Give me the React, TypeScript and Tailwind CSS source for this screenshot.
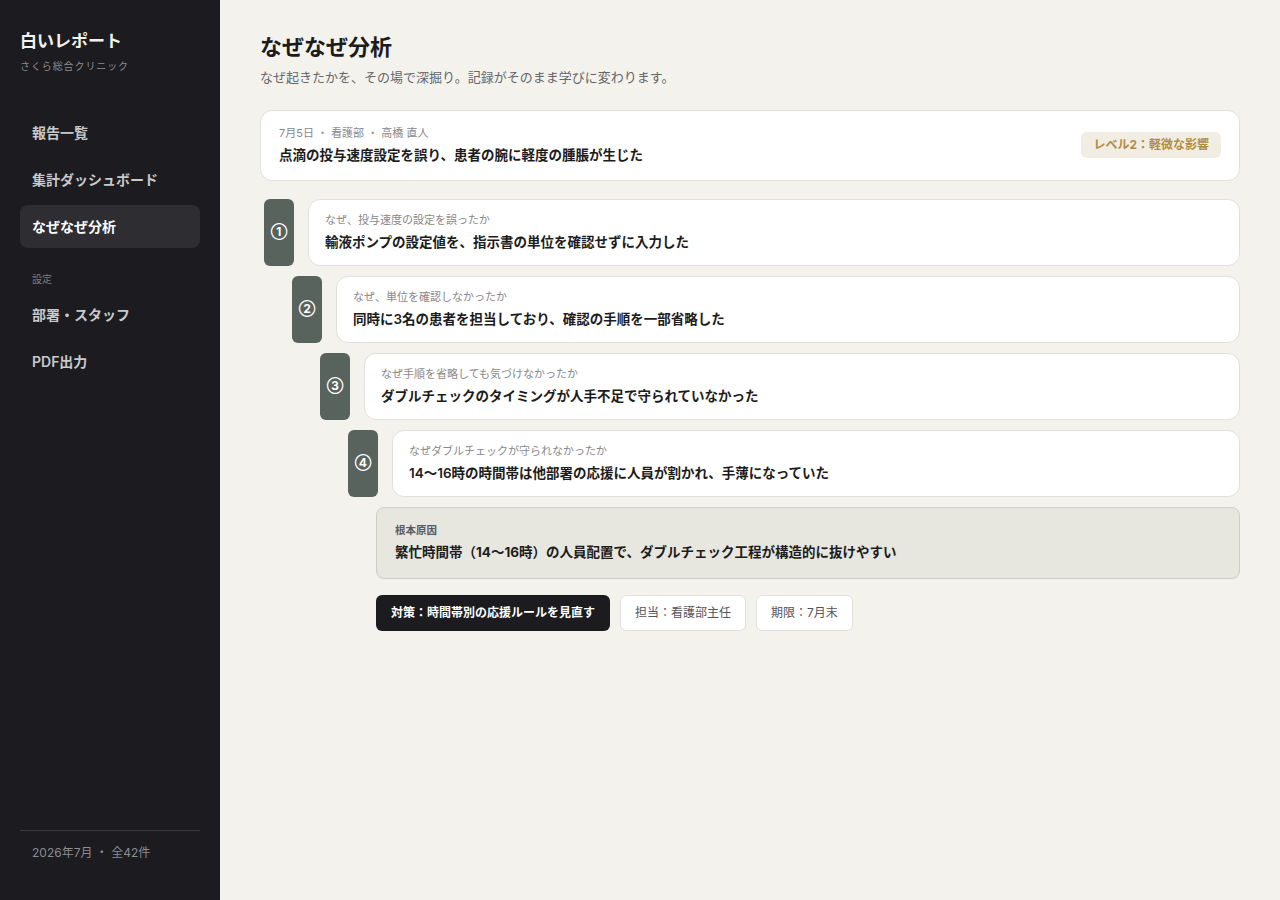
import React from 'react';

const steps = [
  { no: '①', q: 'なぜ、投与速度の設定を誤ったか', a: '輸液ポンプの設定値を、指示書の単位を確認せずに入力した', indent: 'ml-[4px]' },
  { no: '②', q: 'なぜ、単位を確認しなかったか', a: '同時に3名の患者を担当しており、確認の手順を一部省略した', indent: 'ml-[32px]' },
  { no: '③', q: 'なぜ手順を省略しても気づけなかったか', a: 'ダブルチェックのタイミングが人手不足で守られていなかった', indent: 'ml-[60px]' },
  { no: '④', q: 'なぜダブルチェックが守られなかったか', a: '14〜16時の時間帯は他部署の応援に人員が割かれ、手薄になっていた', indent: 'ml-[88px]' },
];

export default function App() {
  return (
    <div className="flex min-h-[900px] w-full font-['Inter','Noto_Sans_CJK_JP',sans-serif] bg-[#f4f2ec]">
      {/* Sidebar */}
      <aside className="w-[220px] shrink-0 bg-[#1c1c20] flex flex-col px-5 pt-[30px] pb-[38px]">
        <div className="text-[17px] font-bold text-[#f4f2ec] leading-[22px]">白いレポート</div>
        <div className="mt-[7px] text-[10px] text-[#8b8b90] tracking-[0.09em]">さくら総合クリニック</div>

        <nav className="mt-[37px] flex flex-col gap-[4px]">
          <div className="h-[43px] px-3 flex items-center text-[14px] font-semibold text-[#c9c9cc]">報告一覧</div>
          <div className="h-[43px] px-3 flex items-center text-[14px] font-semibold text-[#c9c9cc]">集計ダッシュボード</div>
          <div className="h-[43px] px-3 flex items-center text-[14px] font-bold text-white bg-[#2d2d32] rounded-lg">なぜなぜ分析</div>
        </nav>

        <div className="mt-[24px] px-3 text-[10px] text-[#7d7d82]">設定</div>
        <div className="mt-[6px] flex flex-col gap-[4px]">
          <div className="h-[43px] px-3 flex items-center text-[14px] font-semibold text-[#c9c9cc]">部署・スタッフ</div>
          <div className="h-[43px] px-3 flex items-center text-[14px] font-semibold text-[#c9c9cc]">PDF出力</div>
        </div>

        <div className="mt-auto border-t border-[#3a3a3f] pt-[13px] px-3 text-[12px] text-[#8b8b90]">
          2026年7月 ・ 全42件
        </div>
      </aside>

      {/* Main */}
      <main className="flex-1 px-10 pt-[32px]">
        <h1 className="text-[22px] font-bold text-[#1c1c20] leading-[30px]">なぜなぜ分析</h1>
        <p className="mt-[6px] text-[13px] text-[#66666a]">なぜ起きたかを、その場で深掘り。記録がそのまま学びに変わります。</p>

        <div className="mt-[22px] h-[71px] bg-white border border-[#e2e0da] rounded-xl px-[18px] flex items-center justify-between">
          <div>
            <div className="text-[11px] text-[#88888c]">7月5日 ・ 看護部 ・ 高橋 直人</div>
            <div className="mt-[3px] text-[13.5px] font-bold text-[#1c1c20]">点滴の投与速度設定を誤り、患者の腕に軽度の腫脹が生じた</div>
          </div>
          <div className="h-[26px] px-[12px] rounded-md bg-[#f1ede2] flex items-center text-[12px] font-bold text-[#b08c42]">
            レベル2：軽微な影響
          </div>
        </div>

        <div className="mt-[18px] flex flex-col gap-[10px]">
          {steps.map((s) => (
            <div key={s.no} className={`flex gap-[14px] ${s.indent}`}>
              <div className="w-[30px] h-[67px] shrink-0 rounded-md bg-[#58635d] flex items-center justify-center text-[12px] font-bold text-white">
                {s.no}
              </div>
              <div className="flex-1 h-[67px] bg-white border border-[#e2e0da] rounded-xl px-4 flex flex-col justify-center">
                <div className="text-[11px] text-[#88888c]">{s.q}</div>
                <div className="mt-[3px] text-[13.5px] font-semibold text-[#1c1c20]">{s.a}</div>
              </div>
            </div>
          ))}

          <div className="ml-[116px] h-[72px] bg-[#e7e6df] border border-[#cdccc5] rounded-lg px-[18px] flex flex-col justify-center">
            <div className="text-[10.5px] font-bold text-[#5b5b5f]">根本原因</div>
            <div className="mt-[4px] text-[13.5px] font-bold text-[#1c1c20]">繁忙時間帯（14〜16時）の人員配置で、ダブルチェック工程が構造的に抜けやすい</div>
          </div>

          <div className="ml-[116px] mt-[6px] flex gap-[10px]">
            <div className="h-[36px] px-[15px] rounded-md bg-[#1c1c20] flex items-center text-[12px] font-bold text-white">
              対策：時間帯別の応援ルールを見直す
            </div>
            <div className="h-[36px] px-[14px] rounded-md bg-white border border-[#e2e0da] flex items-center text-[12px] text-[#55555a]">
              担当：看護部主任
            </div>
            <div className="h-[36px] px-[14px] rounded-md bg-white border border-[#e2e0da] flex items-center text-[12px] text-[#55555a]">
              期限：7月末
            </div>
          </div>
        </div>
      </main>
    </div>
  );
}
